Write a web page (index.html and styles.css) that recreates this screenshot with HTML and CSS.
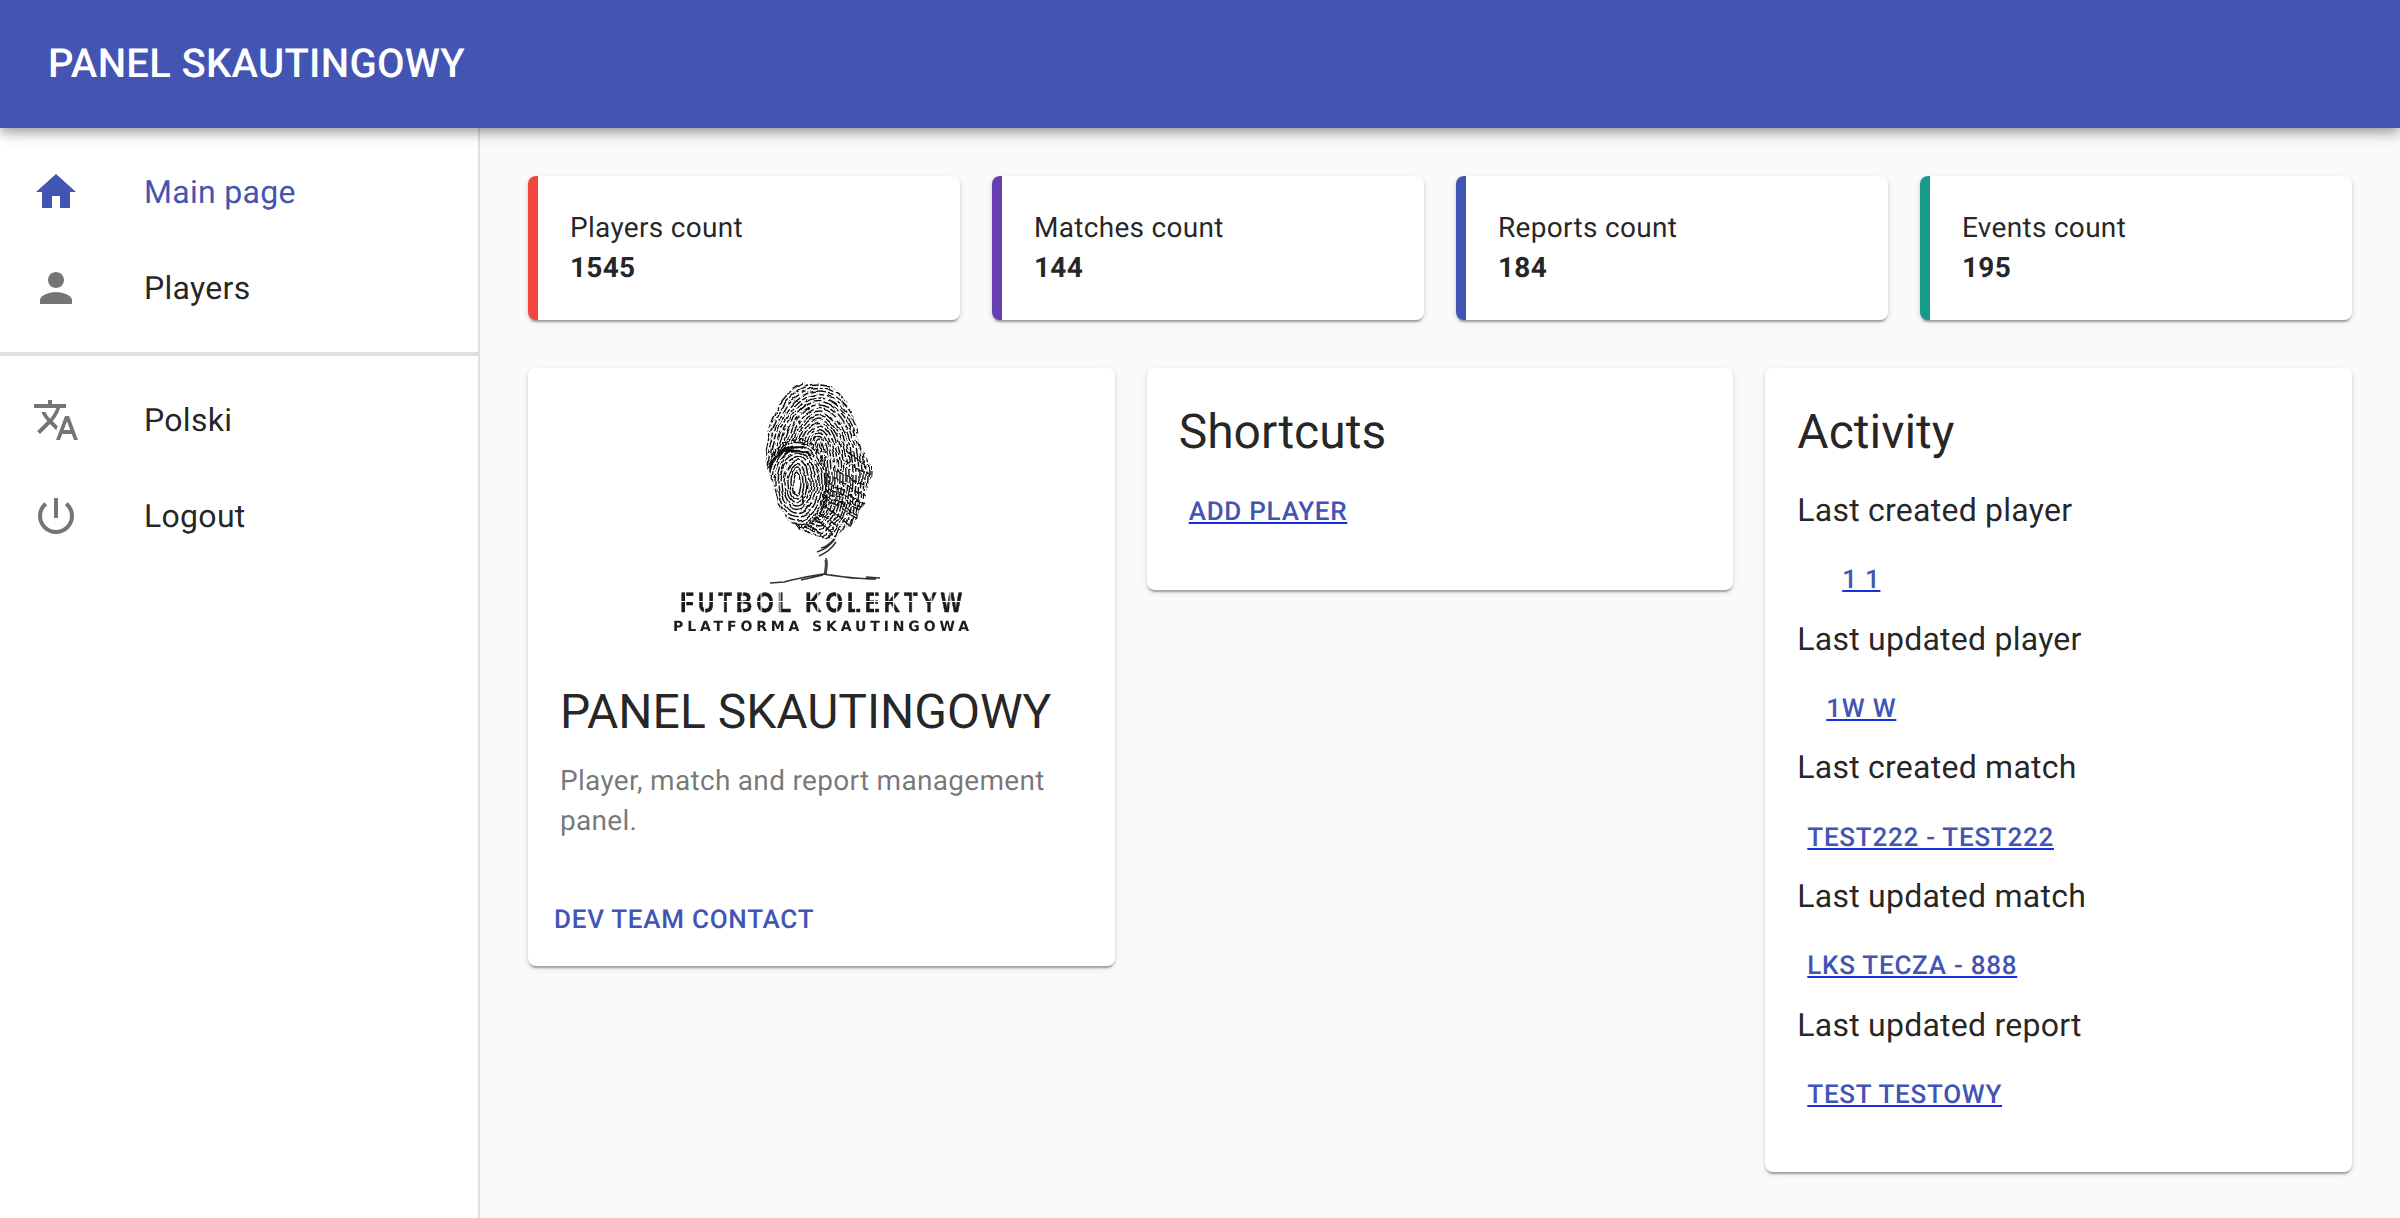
FILE: index.html
```html
<!DOCTYPE html>
<html lang="en">
<head>
<meta charset="utf-8">
<title>Panel Skautingowy</title>
<link rel="stylesheet" href="styles.css">
</head>
<body>
<header class="appbar"><h1 class="appbar-title">PANEL SKAUTINGOWY</h1></header>
<div class="shell">
  <nav class="drawer">
    <ul class="nav-list">
      <li class="nav-item nav-item-active">
        <svg class="nav-icon" viewBox="0 0 24 24"><path d="M10 20v-6h4v6h5v-8h3L12 3 2 12h3v8z"/></svg>
        <span>Main page</span>
      </li>
      <li class="nav-item">
        <svg class="nav-icon" viewBox="0 0 24 24"><path d="M12 12c2.21 0 4-1.79 4-4s-1.79-4-4-4-4 1.79-4 4 1.79 4 4 4zm0 2c-2.67 0-8 1.34-8 4v2h16v-2c0-2.66-5.33-4-8-4z"/></svg>
        <span>Players</span>
      </li>
    </ul>
    <hr class="nav-divider">
    <ul class="nav-list">
      <li class="nav-item">
        <svg class="nav-icon" viewBox="0 0 24 24"><path d="M12.87 15.07l-2.54-2.51.03-.03c1.74-1.94 2.98-4.17 3.71-6.53H17V4h-7V2H8v2H1v1.99h11.17C11.5 7.92 10.44 9.75 9 11.35 8.07 10.32 7.3 9.19 6.69 8h-2c.73 1.63 1.73 3.17 2.98 4.56l-5.09 5.02L4 19l5-5 3.11 3.11.76-2.04zM18.5 10h-2L12 22h2l1.12-3h4.75L21 22h2l-4.5-12zm-2.62 7l1.62-4.33L19.12 17h-3.24z"/></svg>
        <span>Polski</span>
      </li>
      <li class="nav-item">
        <svg class="nav-icon" viewBox="0 0 24 24"><path d="M13 3h-2v10h2V3zm4.83 2.17l-1.42 1.42C17.99 7.86 19 9.81 19 12c0 3.87-3.13 7-7 7s-7-3.13-7-7c0-2.19 1.01-4.14 2.58-5.42L6.17 5.17C4.23 6.82 3 9.26 3 12c0 4.97 4.03 9 9 9s9-4.03 9-9c0-2.74-1.23-5.18-3.17-6.83z"/></svg>
        <span>Logout</span>
      </li>
    </ul>
  </nav>
  <main class="content">
    <section class="stats">
      <div class="stat stat-red"><div class="stat-label">Players count</div><div class="stat-value">1545</div></div>
      <div class="stat stat-purple"><div class="stat-label">Matches count</div><div class="stat-value">144</div></div>
      <div class="stat stat-indigo"><div class="stat-label">Reports count</div><div class="stat-value">184</div></div>
      <div class="stat stat-teal"><div class="stat-label">Events count</div><div class="stat-value">195</div></div>
    </section>
    <section class="panels">
      <article class="card">
        <div class="media">
          <svg class="logo" viewBox="0 0 320 280">
            <defs>
              <clipPath id="print"><path d="M150 14c14-2 27 5 36 20 8 14 12 28 13 44 1 8 12 14 12 26 0 10-5 12-6 22-1 14-8 22-15 29-6 6-10 9-14 14l-8 2c-6-3-12-1-20-6-12-6-22-10-28-24-6-12-6-24-12-36-4-8-5-16-3-26 1-14 3-22 6-32 5-17 20-31 39-33z"/></clipPath>
              <filter id="soft" x="-10%" y="-10%" width="120%" height="120%">
                <feTurbulence type="fractalNoise" baseFrequency="0.08" numOctaves="2" seed="7" result="n"/>
                <feDisplacementMap in="SourceGraphic" in2="n" scale="6" xChannelSelector="R" yChannelSelector="G"/>
                <feGaussianBlur stdDeviation="0.45"/>
              </filter>
              <filter id="blur"><feGaussianBlur stdDeviation="0.45"/></filter>
              <pattern id="cuts" width="18.9" height="30" patternUnits="userSpaceOnUse" x="24" y="220"><rect width="1.2" height="30"/></pattern>
            </defs>
            <g class="print" filter="url(#soft)">
              <g clip-path="url(#print)">
                <ellipse cx="158" cy="108" rx="58" ry="96" stroke-dasharray="11 2 5 2"/>
                <ellipse cx="158" cy="108" rx="55" ry="92" stroke-dasharray="7 1.5 14 2"/>
                <ellipse cx="158" cy="108" rx="52" ry="88.5" stroke-dasharray="10 2 4 2"/>
                <ellipse cx="158" cy="108" rx="49" ry="85" stroke-dasharray="16 2 6 2"/>
                <ellipse cx="158" cy="108" rx="46" ry="81.5" stroke-dasharray="5 2 9 2"/>
                <ellipse cx="158" cy="108" rx="43" ry="78" stroke-dasharray="13 2 7 3"/>
                <ellipse cx="158" cy="108" rx="40" ry="74.5" stroke-dasharray="8 2 18 2"/>
                <ellipse cx="158" cy="108" rx="37" ry="71" stroke-dasharray="6 2 11 2"/>
                <ellipse cx="158" cy="108" rx="34" ry="67.5" stroke-dasharray="15 3 5 2"/>
                <ellipse cx="158" cy="108" rx="31" ry="64" stroke-dasharray="9 2 12 2"/>
                <ellipse cx="158" cy="108" rx="28" ry="60.5" stroke-dasharray="6 2 17 2"/>
                <ellipse cx="158" cy="108" rx="25" ry="57" stroke-dasharray="12 2 8 2"/>
                <ellipse cx="158" cy="108" rx="22" ry="53.5" stroke-dasharray="9 2 14 2"/>
                <ellipse cx="158" cy="108" rx="19" ry="50" stroke-dasharray="7 2 10 2"/>
                <ellipse cx="158" cy="108" rx="16" ry="46.5" stroke-dasharray="13 2 5 2"/>
                <ellipse cx="158" cy="108" rx="13" ry="43" stroke-dasharray="8 2 11 2"/>
                <ellipse cx="158" cy="108" rx="10" ry="39.5" stroke-dasharray="15 2"/>
                <ellipse cx="158" cy="108" rx="7" ry="36" stroke-dasharray="11 2"/>
                <ellipse cx="158" cy="108" rx="4" ry="32" stroke-dasharray="9 2"/>
                <path class="print-lines" d="M166 114l44 26M162 120l44 26M158 126l44 28M172 108l38 24M176 101l36 22M154 132l40 28M150 138l36 28M146 144l30 26M140 150l28 24M134 156l22 20M182 92l26 16M186 84l18 12M168 120l42 25M164 126l42 27"/>
                <ellipse class="print-mask" cx="136" cy="115" rx="28" ry="41"/>
                <ellipse cx="136" cy="115" rx="31" ry="44" stroke-dasharray="9 2 5 2"/>
                <ellipse cx="136" cy="115" rx="28" ry="40.5" stroke-dasharray="14 2 5 2"/>
                <ellipse cx="136" cy="115" rx="25" ry="37" stroke-dasharray="19 2 7 2"/>
                <ellipse cx="136" cy="115" rx="22" ry="33.5" stroke-dasharray="12 2"/>
                <ellipse cx="136" cy="115" rx="19" ry="30" stroke-dasharray="17 2"/>
                <ellipse cx="136" cy="115" rx="16" ry="26.5" stroke-dasharray="21 2"/>
                <ellipse cx="136" cy="115" rx="13" ry="23" stroke-dasharray="16 2"/>
                <ellipse cx="136" cy="115" rx="10" ry="19.5" stroke-dasharray="24 2"/>
                <ellipse cx="136" cy="115" rx="7" ry="16"/>
                <ellipse cx="136" cy="115" rx="4" ry="12"/>
                <path class="print-dark" d="M108 100c4-10 12-17 26-19M112 92c6-8 16-14 30-14M140 128l3 8M118 140l5 8M124 84c8-3 18-2 26 4"/>
              </g>
            </g>
            <g filter="url(#blur)">
              <path class="tree" d="M158 188c6-3 12-6 17-14M156 184c8-3 12-5 18-13M160 180c5-1 9-4 13-9M165 190c1 6 0 11 0 17"/>
              <path class="trunk" d="M165 192c1 5 0 10-1 15"/>
              <path class="ground" d="M109 215l14-1c14-4 28-6 40-8 14 3 30 4 46 5M140 212l22-5M170 207l20 3 25 1M205 209l14 1"/>
            </g>
            <g filter="url(#blur)">
              <text class="logo-title" transform="scale(.8 1)" x="24" y="244" textLength="352" lengthAdjust="spacing">FUTBOL KOLEKTYW</text>
              <rect class="stencil" x="16" y="233" width="290" height="1"/>
              <rect class="stencil-cuts" x="16" y="222" width="290" height="24"/>
              <text class="logo-sub" x="12" y="263" textLength="296" lengthAdjust="spacing">PLATFORMA SKAUTINGOWA</text>
            </g>
          </svg>
        </div>
        <div class="card-body">
          <h2 class="card-title card-title-panel">PANEL SKAUTINGOWY</h2>
          <p class="card-text">Player, match and report management panel.</p>
        </div>
        <div class="card-actions"><span class="action">DEV TEAM CONTACT</span></div>
      </article>
      <article class="card card-pad">
        <h2 class="card-title">Shortcuts</h2>
        <a class="btn-link" href="#">ADD PLAYER</a>
      </article>
      <article class="card card-pad">
        <h2 class="card-title">Activity</h2>
        <div class="rows">
          <h3 class="row-title">Last created player</h3>
          <a class="btn-link" href="#">1 1</a>
          <h3 class="row-title">Last updated player</h3>
          <a class="btn-link" href="#">1W W</a>
          <h3 class="row-title">Last created match</h3>
          <a class="btn-link" href="#">TEST222 - TEST222</a>
          <h3 class="row-title">Last updated match</h3>
          <a class="btn-link" href="#">LKS TECZA - 888</a>
          <h3 class="row-title">Last updated report</h3>
          <a class="btn-link" href="#">TEST TESTOWY</a>
        </div>
      </article>
    </section>
  </main>
</div>
</body>
</html>
```
FILE: styles.css
```css
* { box-sizing: border-box; }
html, body { height: 100%; }
body {
  margin: 0;
  display: flex;
  flex-direction: column;
  background: #fafafa;
  color: rgba(0,0,0,.87);
  font-family: Roboto, "Liberation Sans", sans-serif;
  text-rendering: geometricPrecision;
  overflow: hidden;
}
.appbar {
  position: relative;
  z-index: 2;
  height: 128px;
  flex: none;
  display: flex;
  align-items: center;
  padding: 0 48px;
  background: #4255b3;
  color: #fff;
  box-shadow: 0 4px 8px -2px rgba(0,0,0,.2), 0 8px 10px 0 rgba(0,0,0,.14), 0 2px 20px 0 rgba(0,0,0,.12);
}
.appbar-title { margin: 0; font-size: 40px; font-weight: 500; line-height: 1.6; letter-spacing: .0075em; }
.shell { flex: 1; display: flex; min-height: 0; }
.drawer { width: 480px; flex: none; background: #fff; border-right: 2px solid #e0e0e0; }
.nav-list { list-style: none; margin: 0; padding: 16px 0; }
.nav-item { height: 96px; display: flex; align-items: center; padding: 0 32px; font-size: 32px; line-height: 1.5; letter-spacing: .00938em; }
.nav-item-active { color: #4255b3; }
.nav-icon { width: 48px; height: 48px; margin-right: 64px; flex: none; fill: rgba(0,0,0,.54); }
.nav-item-active .nav-icon { fill: #4255b3; }
.nav-divider { margin: 0; border: 0; height: 4px; background: #e0e0e0; }
.content { flex: 1; padding: 48px; min-width: 0; }
.stats { display: grid; grid-template-columns: repeat(4, 1fr); gap: 32px; }
.stat, .card { background: #fff; border-radius: 8px; box-shadow: 0 4px 2px -2px rgba(0,0,0,.2), 0 2px 2px 0 rgba(0,0,0,.14), 0 2px 6px 0 rgba(0,0,0,.12); }
.stat { height: 144px; padding: 32px; border-left: 10px solid; }
.stat-red { border-left-color: #f4453f; }
.stat-purple { border-left-color: #673eb0; }
.stat-indigo { border-left-color: #4255b3; }
.stat-teal { border-left-color: #199a89; }
.stat-label { font-size: 28px; line-height: 40px; letter-spacing: .01071em; }
.stat-value { font-size: 28px; line-height: 40px; font-weight: 700; letter-spacing: .01071em; }
.panels { margin-top: 48px; display: grid; grid-template-columns: repeat(3, 1fr); gap: 32px; align-items: start; }
.card { overflow: hidden; }
.media { height: 280px; display: flex; justify-content: center; }
.logo { width: 320px; height: 280px; flex: none; }
.print ellipse, .print path { fill: none; stroke: #111; stroke-width: 1.4; }
.print .print-dark { stroke-width: 2.2; }
.print .print-lines { stroke-width: 1.4; stroke-dasharray: 8 2 13 2; }
.print .print-mask { fill: #fff; stroke: none; }
.tree { fill: none; stroke: #333; stroke-width: 1.5; }
.trunk { fill: none; stroke: #444; stroke-width: 3; }
.ground { fill: none; stroke: #333; stroke-width: 1.5; }
.logo-title { font-family: "Liberation Sans", sans-serif; font-weight: 700; font-size: 28px; fill: #1a1a1a; stroke: #1a1a1a; stroke-width: .5; }
.stencil { fill: #fff; }
.stencil-cuts { fill: url(#cuts); }
#cuts rect { fill: #fff; }
.logo-sub { font-family: "DejaVu Sans", sans-serif; font-weight: 700; font-size: 14px; fill: #1a1a1a; }
.card-body { padding: 32px 32px 33px; }
.card-title { margin: 0 0 18px; font-size: 48px; font-weight: 400; line-height: 1.334; }
.card-title-panel { margin-bottom: 17px; }
.card-text { margin: 0; font-size: 28px; line-height: 1.43; letter-spacing: .01071em; color: rgba(0,0,0,.54); }
.card-actions { padding: 16px 16px 14px; }
.action { display: block; padding: 8px 10px; font-size: 26px; line-height: 1.75; font-weight: 500; letter-spacing: .02857em; color: #4255b3; }
.card-pad { padding: 32px 32px 46px; }
.rows { padding-top: 1px; }
.row-title { margin: 2px 0 14px; font-size: 32px; font-weight: 400; line-height: 1.6; letter-spacing: .0075em; }
.btn-link { display: table; min-width: 128px; padding: 8px 10px; font-size: 26px; line-height: 1.75; font-weight: 500; letter-spacing: .02857em; text-align: center; color: #4255b3; text-decoration: underline; text-decoration-color: #1a2fe0; }
```
